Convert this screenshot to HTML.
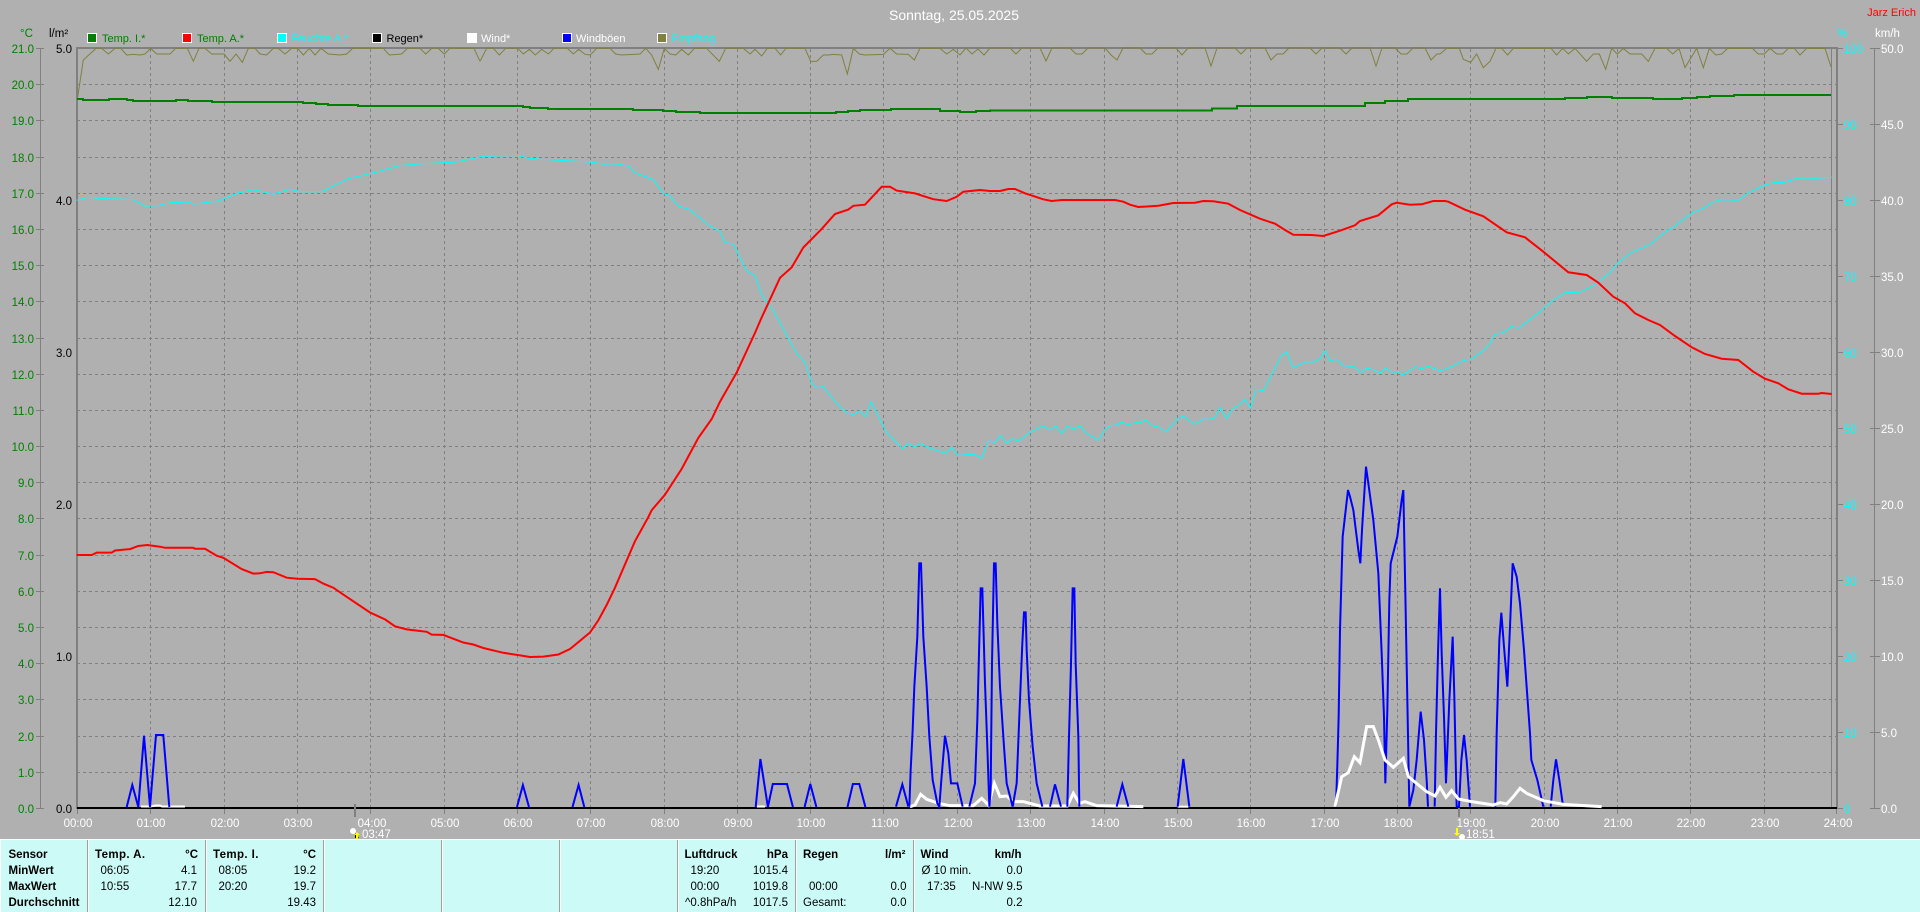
<!DOCTYPE html>
<html lang="de">
<head>
<meta charset="utf-8">
<title>Sonntag, 25.05.2025</title>
<style>
html,body{margin:0;padding:0;background:#b0b0b0;overflow:hidden;width:1920px;height:912px}
svg{display:block;position:absolute;left:0;top:0}
text{font-family:"Liberation Sans",Arial,sans-serif;font-size:11.5px}
.e{text-anchor:end}
.m{text-anchor:middle}
.g{fill:#008000}
.k{fill:#000}
.c{fill:#00ffff}
.w{fill:#fff}
.b{font-weight:bold}
polyline,path.l{fill:none;vector-effect:non-scaling-stroke;stroke-linejoin:miter}
</style>
</head>
<body>
<svg width="1920" height="912" viewBox="0 0 1920 912" xmlns="http://www.w3.org/2000/svg">
<rect width="1920" height="912" fill="#b0b0b0"/>

<!-- title -->
<text x="889" y="20" class="w" style="font-size:14px">Sonntag, 25.05.2025</text>
<text x="1916" y="16" class="e" fill="#ff0000" style="font-size:11px">Jarz Erich</text>

<!-- axis headers -->
<text x="20" y="37" class="g">°C</text>
<text x="49" y="37" class="k">l/m²</text>
<text x="1837" y="37" class="c">%</text>
<text x="1875" y="37" class="w">km/h</text>

<!-- legend -->
<g stroke="#fff" stroke-width="1" shape-rendering="crispEdges">
<rect x="87.5" y="33.5" width="9" height="9" fill="#008000"/>
<rect x="182.5" y="33.5" width="9" height="9" fill="#ff0000"/>
<rect x="277.5" y="33.5" width="9" height="9" fill="#00ffff"/>
<rect x="372.5" y="33.5" width="9" height="9" fill="#000"/>
<rect x="467.5" y="33.5" width="9" height="9" fill="#fff"/>
<rect x="562.5" y="33.5" width="9" height="9" fill="#0000ff"/>
<rect x="657.5" y="33.5" width="9" height="9" fill="#808040"/>
</g>
<g style="font-size:11px">
<text x="102" y="42" class="g" style="font-size:11px">Temp. I.*</text>
<text x="197" y="42" class="g" style="font-size:11px">Temp. A.*</text>
<text x="291.500" y="42" class="c" style="font-size:11px">Feuchte A.*</text>
<text x="386.500" y="42" class="k" style="font-size:11px">Regen*</text>
<text x="481" y="42" class="w" style="font-size:11px">Wind*</text>
<text x="576" y="42" class="w" style="font-size:11px">Windböen</text>
<text x="671.500" y="42" class="c" style="font-size:11px">Empfang</text>
</g>

<!-- grid -->
<path shape-rendering="crispEdges" stroke="#808080" stroke-width="1" stroke-dasharray="3 3" fill="none" d="M77 84.5H1836M77 120.5H1836M77 157.5H1836M77 193.5H1836M77 229.5H1836M77 265.5H1836M77 301.5H1836M77 338.5H1836M77 374.5H1836M77 410.5H1836M77 446.5H1836M77 482.5H1836M77 518.5H1836M77 555.5H1836M77 591.5H1836M77 627.5H1836M77 663.5H1836M77 699.5H1836M77 736.5H1836M77 772.5H1836"/>
<path shape-rendering="crispEdges" stroke="#808080" stroke-width="1" stroke-dasharray="3 3" fill="none" d="M150.500 49V808M224.500 49V808M297.500 49V808M370.500 49V808M444.500 49V808M517.500 49V808M590.500 49V808M664.500 49V808M737.500 49V808M810.500 49V808M883.500 49V808M957.500 49V808M1030.500 49V808M1104.500 49V808M1177.500 49V808M1250.500 49V808M1324.500 49V808M1397.500 49V808M1470.500 49V808M1544.500 49V808M1617.500 49V808M1690.500 49V808M1764.500 49V808"/>
<!-- hour ticks -->
<path shape-rendering="crispEdges" stroke="#808080" stroke-width="1" fill="none" d="M77.500 808V814M150.500 808V814M224.500 808V814M297.500 808V814M370.500 808V814M444.500 808V814M517.500 808V814M590.500 808V814M664.500 808V814M737.500 808V814M810.500 808V814M883.500 808V814M957.500 808V814M1030.500 808V814M1104.500 808V814M1177.500 808V814M1250.500 808V814M1324.500 808V814M1397.500 808V814M1470.500 808V814M1544.500 808V814M1617.500 808V814M1690.500 808V814M1764.500 808V814M1836.500 808V814"/>

<!-- axes -->
<g shape-rendering="crispEdges" fill="#808080">
<rect x="76" y="47" width="1761" height="2"/>
<rect x="76" y="47" width="2" height="762"/>
<rect x="1831" y="48" width="1" height="760"/>
<rect x="1836" y="47" width="2" height="762"/>
<rect x="40" y="48" width="1" height="760"/>
<rect x="1874" y="48" width="1" height="760"/>
</g>
<path shape-rendering="crispEdges" stroke="#808080" stroke-width="1" fill="none" d="M36 48.500H44M36 84.500H44M36 120.500H44M36 157.500H44M36 193.500H44M36 229.500H44M36 265.500H44M36 301.500H44M36 338.500H44M36 374.500H44M36 410.500H44M36 446.500H44M36 482.500H44M36 518.500H44M36 555.500H44M36 591.500H44M36 627.500H44M36 663.500H44M36 699.500H44M36 736.500H44M36 772.500H44M36 808.500H44"/>
<path shape-rendering="crispEdges" stroke="#808080" stroke-width="1" fill="none" d="M1838 48.500H1843M1838 124.500H1843M1838 200.500H1843M1838 276.500H1843M1838 352.500H1843M1838 428.500H1843M1838 504.500H1843M1838 580.500H1843M1838 656.500H1843M1838 732.500H1843M1838 808.500H1843M1870 48.500H1880M1870 124.500H1880M1870 200.500H1880M1870 276.500H1880M1870 352.500H1880M1870 428.500H1880M1870 504.500H1880M1870 580.500H1880M1870 656.500H1880M1870 732.500H1880M1870 808.500H1880"/>

<!-- left temp labels -->
<g class="e">
<text x="34" y="53" class="g e">21.0</text>
<text x="34" y="89" class="g e">20.0</text>
<text x="34" y="125" class="g e">19.0</text>
<text x="34" y="162" class="g e">18.0</text>
<text x="34" y="198" class="g e">17.0</text>
<text x="34" y="234" class="g e">16.0</text>
<text x="34" y="270" class="g e">15.0</text>
<text x="34" y="306" class="g e">14.0</text>
<text x="34" y="343" class="g e">13.0</text>
<text x="34" y="379" class="g e">12.0</text>
<text x="34" y="415" class="g e">11.0</text>
<text x="34" y="451" class="g e">10.0</text>
<text x="34" y="487" class="g e">9.0</text>
<text x="34" y="523" class="g e">8.0</text>
<text x="34" y="560" class="g e">7.0</text>
<text x="34" y="596" class="g e">6.0</text>
<text x="34" y="632" class="g e">5.0</text>
<text x="34" y="668" class="g e">4.0</text>
<text x="34" y="704" class="g e">3.0</text>
<text x="34" y="741" class="g e">2.0</text>
<text x="34" y="777" class="g e">1.0</text>
<text x="34" y="813" class="g e">0.0</text>
</g>
<!-- rain labels -->
<text x="72" y="53" class="k e">5.0</text>
<text x="72" y="205" class="k e">4.0</text>
<text x="72" y="357" class="k e">3.0</text>
<text x="72" y="509" class="k e">2.0</text>
<text x="72" y="661" class="k e">1.0</text>
<text x="72" y="813" class="k e">0.0</text>
<!-- percent labels -->
<text x="1844" y="53" class="c">100</text>
<text x="1844" y="129" class="c">90</text>
<text x="1844" y="205" class="c">80</text>
<text x="1844" y="281" class="c">70</text>
<text x="1844" y="357" class="c">60</text>
<text x="1844" y="433" class="c">50</text>
<text x="1844" y="509" class="c">40</text>
<text x="1844" y="585" class="c">30</text>
<text x="1844" y="661" class="c">20</text>
<text x="1844" y="737" class="c">10</text>
<text x="1844" y="813" class="c">0</text>
<!-- km/h labels -->
<text x="1881" y="53" class="w">50.0</text>
<text x="1881" y="129" class="w">45.0</text>
<text x="1881" y="205" class="w">40.0</text>
<text x="1881" y="281" class="w">35.0</text>
<text x="1881" y="357" class="w">30.0</text>
<text x="1881" y="433" class="w">25.0</text>
<text x="1881" y="509" class="w">20.0</text>
<text x="1881" y="585" class="w">15.0</text>
<text x="1881" y="661" class="w">10.0</text>
<text x="1881" y="737" class="w">5.0</text>
<text x="1881" y="813" class="w">0.0</text>

<!-- hour labels -->
<g>
<text x="78" y="827" class="w m">00:00</text>
<text x="151" y="827" class="w m">01:00</text>
<text x="225" y="827" class="w m">02:00</text>
<text x="298" y="827" class="w m">03:00</text>
<text x="372" y="827" class="w m">04:00</text>
<text x="445" y="827" class="w m">05:00</text>
<text x="518" y="827" class="w m">06:00</text>
<text x="591" y="827" class="w m">07:00</text>
<text x="665" y="827" class="w m">08:00</text>
<text x="738" y="827" class="w m">09:00</text>
<text x="811" y="827" class="w m">10:00</text>
<text x="885" y="827" class="w m">11:00</text>
<text x="958" y="827" class="w m">12:00</text>
<text x="1031" y="827" class="w m">13:00</text>
<text x="1105" y="827" class="w m">14:00</text>
<text x="1178" y="827" class="w m">15:00</text>
<text x="1251" y="827" class="w m">16:00</text>
<text x="1325" y="827" class="w m">17:00</text>
<text x="1398" y="827" class="w m">18:00</text>
<text x="1471" y="827" class="w m">19:00</text>
<text x="1545" y="827" class="w m">20:00</text>
<text x="1618" y="827" class="w m">21:00</text>
<text x="1691" y="827" class="w m">22:00</text>
<text x="1765" y="827" class="w m">23:00</text>
<text x="1838" y="827" class="w m">24:00</text>
</g>

<!-- signal (olive) -->
<g transform="scale(.33333)"><polyline stroke="#808040" stroke-width="1" points="232,297 250,180 288,145 305,145 325,162 345,145 362,145 380,165 400,163 420,165 435,162 452,145 470,162 510,162 527,145 562,145 580,184 597,145 615,145 635,162 672,162 690,184 708,162 727,187 745,145 765,145 780,162 800,165 820,145 835,145 855,162 875,145 893,145 910,165 928,145 945,165 963,145 985,162 1020,165 1040,162 1058,145 1150,145 1168,165 1205,162 1222,145 1260,145 1277,162 1295,145 1315,145 1333,162 1350,145 1422,145 1440,184"/></g>
<g transform="translate(480 0) scale(.33333)"><polyline stroke="#808040" stroke-width="1" points="0,184 20,145 40,145 58,165 77,145 113,145 130,162 148,148 166,165 185,148 205,162 222,145 262,145 280,162 296,148 315,163 331,165 350,145 390,145 407,162 425,165 480,162 497,145 515,165 535,208 553,145 570,162 587,165 605,148 625,165 643,145 680,145 718,184 737,145 790,145 810,162 825,148 845,168 862,145 885,145 902,165 918,145 975,145 992,184 1010,184 1030,165 1045,165 1060,163 1085,165 1102,222 1120,145 1138,162 1155,165 1210,163 1230,145 1250,162 1285,163 1303,180 1320,145 1380,145 1400,162 1420,148 1440,165"/></g>
<polyline stroke="#808040" stroke-width="1" points="960,55 966,48 972,54 978,49 984,55 990,48 1010,48 1016,54 1022,48 1040,48 1046,61 1052,48 1070,48 1076,54 1082,54 1088,48 1105,48 1111,55 1117,60 1123,48 1140,48 1146,54 1152,54 1158,48 1176,48 1182,55 1188,48 1205,48 1211,66 1217,48 1235,48 1241,54 1247,48 1265,48 1271,60 1277,54 1283,54 1289,48 1310,48 1316,54 1322,48 1340,48 1346,54 1352,48 1370,48 1376,66 1382,48 1395,48 1401,54 1407,54 1413,48 1425,48 1431,60 1437,54 1440,54"/>
<g transform="translate(1440 0) scale(.33333)"><polyline stroke="#808040" stroke-width="1" points="0,162 20,145 58,145 70,178 92,187 110,162 130,203 150,184 168,145 185,145 203,165 220,145 333,145 350,165 368,145 385,162 405,145 440,184 460,162 478,162 497,208 515,145 532,162 550,145 570,162 605,162 625,184 645,145 680,145 698,162 717,145 735,203 770,145 790,203 808,145 827,165 845,162 863,145 937,145 955,162 973,162 990,145 1010,162 1028,162 1045,145 1063,145 1080,165 1100,145 1155,145 1173,200"/></g>

<!-- indoor temp (green) -->
<path class="l" shape-rendering="crispEdges" stroke="#008000" stroke-width="2" d="M77 99H83V100H109V99H127V100H133V101H176V100H188V101H212V102H303V103H316V104H328V105H358V106H523V107H530V108H548V109H633V110H663V111H676V112H700V113H836V112H848V111H860V110H891V109H940V111H960V112H976V111H990V110.500H1212V108.500H1237V106H1365V103H1385V101H1408V99H1565V98H1587V97H1612V98H1653V99H1682V98H1697V97H1710V96H1734V95H1831"/>

<!-- humidity (cyan) -->
<polyline stroke="#00ffff" stroke-width="1" points="76.700,200.300 88.300,197.200 100,198.500 133.300,199.600 145,206.100 156.700,205.800 170,202.700 188.300,202 193.300,204.100 218.300,201 236.700,193.400 253.300,189.600 273.300,194.100 290,189.200 300,191.700 321.700,191.700 348.300,178.600 378.300,171.700 398.300,165.800 421.700,163.800 456.700,162 483.300,156.200 518.300,155.500 526.700,157.900 540,159.300 590,162 603.300,164.100 616.700,163.800 628.300,166.200 635,172.700 653.300,179.600 663.300,193.400 670,195.800 678.300,206.100 690,209.600 710,226.100 720,231.600 725,242.600 733.300,244 746.700,270.900 755,275.300 761.700,295 773.300,310.500 796.700,353.500 805,362.100 811.700,382.800 816.700,388 823.300,386.600 836.700,403.500 846.700,412.800 853.300,414.500 860,410.700 865.700,416.600 871,401.700 886.700,432.700 902.700,448.900 908.300,443.100 915,447.200 920,443.100 928.300,447.500 945,453.400 951.700,447.500 958.300,455.500 973.300,454.100 981.700,458.300 988.300,441 995,442.300 1000.700,435.300 1006.700,443.300 1012.300,438.700 1018.300,441.300 1030,432.300 1043.300,425.700 1049.300,430 1056,426 1061.700,433.300 1067.300,426.300 1073.300,428.700 1080,426 1086.700,433.300 1098.300,440.300 1105,429.300 1110,425.700 1116.700,425 1121.700,422 1128.300,425 1135,422.700 1140,422.700 1145.700,420 1153.300,426 1160,427.300 1165.700,432 1178.300,418 1183.300,416.300 1195,424.300 1202.700,419.300 1210,419.300 1215,417.700 1220,407.700 1226.700,418.300 1233.300,407.700 1238.300,405.700 1245,399.300 1250.700,408.300 1256,389.300 1263.300,390.700 1273.300,371.700 1281,355.700 1286.700,352 1293.300,368 1305,362 1313.300,362 1320,358.700 1325,350.700 1330,360.700 1336.700,359.300 1343.300,365.700 1353.300,366.300 1360.700,372.300 1366.700,368.300 1373.300,369.700 1380,373 1385.700,368.300 1391.700,372 1396.700,371.700 1403.300,375 1415,366.700 1421.700,368.700 1428.300,366 1440,371 1453.300,366 1460,361.700 1471.700,358.700 1483.300,350.700 1490,343.300 1495,334.300 1503.300,332.700 1511.700,326.300 1518.300,328.300 1540,311.700 1553.300,300 1565,292.700 1580,292.300 1595,284.700 1610,272.700 1616.700,264 1630,253.300 1650,244.300 1666.700,230.700 1673.300,227.300 1680,221.700 1691.700,213.300 1703.300,208.300 1713.300,201.700 1721.700,199.700 1738.300,200.300 1748.300,192.700 1765,185 1775,182.300 1783.300,182.700 1798.300,178 1816.700,178.300 1831.700,177.300"/>

<!-- outdoor temp (red) -->
<polyline stroke="#ff0000" stroke-width="2" points="76.700,555 91.700,555 96.700,552.600 111.700,552.600 115,550.500 130,549.100 138.300,546 147.300,545 160,546.700 165,547.800 193.300,547.800 195,548.800 205,548.800 216.700,555.700 223.300,557.800 241.700,569.100 253.300,573.600 260,573.300 266.700,571.900 273.300,572.200 286.700,577.700 297.300,578.800 315,579.100 323.300,583.600 333.300,587.700 343.300,594.600 370,612.500 385,619.400 395,626.300 406.700,629.400 426.700,631.800 431.700,634.600 443.300,634.900 463.300,642.500 473.300,644.500 483.300,648 503.300,652.800 520,655.400 530,657 543.300,656.600 558.300,654.500 570,649 590,632.500 598.300,620.400 606.700,604.900 615,587.700 628.300,556.700 635,541.200 648.300,517.100 651.700,510.200 665,494.700 681.700,468.900 698.300,437.900 711.700,419 720,401.700 736.700,372.500 755,332.900 761.700,317.400 780,277.800 791.700,267.400 803.300,247.500 821.700,228.900 835,214 848.300,209.600 853.300,205.800 865,204.700 881.700,186.800 890,186.800 896.700,190.600 915,193.400 933.300,199.200 946.700,201 956.700,196.800 963.300,191.700 980,190 990,191 1000,191 1008.300,189 1015,189 1025,193.300 1043.300,199.300 1051.700,201 1061.700,200 1115,200 1123.300,201.700 1130,204.700 1138.300,207 1158.300,205.700 1173.300,203 1195,202.700 1203.300,201 1213.300,201.300 1228.300,203.700 1240,210 1260,218.700 1275,223.700 1285,230 1293.300,234.700 1311.700,235 1323.300,236 1340,230.700 1355,225.300 1360,221 1378.300,215.300 1391.700,204.300 1396.700,202.700 1410,204.700 1421.700,204.300 1433.300,201 1445,201 1448.300,201.700 1465,209.700 1473.300,212.700 1483.300,216.300 1506.700,232.300 1525,237.300 1543.300,251.700 1568.300,272.300 1586.700,275 1598.300,282.700 1613.300,296.700 1625,303.300 1635,313.300 1648.300,320 1660,325 1675,336 1691.700,347.300 1705,354 1721.700,358.700 1738.300,360 1753.300,371.700 1765,378.700 1778.300,383.300 1788.300,389.300 1801.700,393.700 1818.300,393.700 1821.700,393 1831.700,394"/>

<!-- baseline -->
<rect x="77" y="807" width="1760" height="2" fill="#000" shape-rendering="crispEdges"/>

<!-- white wind -->
<polyline stroke="#fff" stroke-width="2" points="141,806.500 150,806.500 156,805.500 160,805.500 162,806.500 185,806.500"/>
<polyline stroke="#fff" stroke-width="2" points="757,806.500 765,806.500"/>
<g transform="translate(880 540) scale(.33333)"><polyline stroke="#fff" stroke-width="3" points="90,800 105,795 122,763 140,778 175,790 210,797 280,797 305,775 325,795 343,730 360,770 380,768 400,785 430,785 480,798 562,798 580,760 598,790 615,785 650,797 790,800"/><polyline stroke="#fff" stroke-width="2" points="893,800 925,800"/></g>

<!-- blue gusts -->
<polyline stroke="#0000ff" stroke-width="2" points="126.700,807 132.300,785 138.300,807 144,735.700 150,807 156,735 163.300,735 169.300,807"/>
<polyline stroke="#0000ff" stroke-width="2" points="517,807 522.900,785 529,807"/>
<polyline stroke="#0000ff" stroke-width="2" points="572.500,807 578.600,785 584.300,807"/>
<polyline stroke="#0000ff" stroke-width="2" points="755.700,807 760.400,759 767.900,807 772.800,784 787,784 792.900,807"/>
<polyline stroke="#0000ff" stroke-width="2" points="804.600,807 810.300,784 816.400,807"/>
<polyline stroke="#0000ff" stroke-width="2" points="847.500,807 852.900,784 859.300,784 865.400,807"/>
<g transform="translate(880 540) scale(.33333)">
<polyline stroke="#0000ff" stroke-width="2" points="48,800 67,733 85,800"/>
<polyline stroke="#0000ff" stroke-width="2" points="88,800 92,690 98,570 103,440 112,290 118,70 123,70 130,290 140,440 148,590 158,720 172,790 178,800 184,720 195,587 205,640 213,730 232,730 248,800"/>
<polyline stroke="#0000ff" stroke-width="2" points="268,800 285,730 292,540 297,340 302,145 307,145 315,430 322,620 328,800 332,750 336,370 342,70 347,70 352,250 360,440 372,620 380,730 398,800 410,730 420,480 427,310 432,217 437,217 440,330 447,480 458,620 470,730 487,800"/>
<polyline stroke="#0000ff" stroke-width="2" points="510,800 525,733 543,800"/>
<polyline stroke="#0000ff" stroke-width="2" points="562,800 567,590 573,370 578,145 583,145 587,370 595,590 598,800"/>
<polyline stroke="#0000ff" stroke-width="2" points="710,800 727,733 745,800"/>
<polyline stroke="#0000ff" stroke-width="2" points="893,800 910,657 928,800"/>
</g>
<g transform="translate(1300 440) scale(.33333)">
<polyline stroke="#0000ff" stroke-width="2" points="108,1100 112,975 116,830 120,570 124,430 128,290 144,150 150,170 160,210 175,330 181,370 186,270 198,80 205,130 220,240 235,400 245,640 252,830 256,1030 262,810 268,480 272,370 292,290 305,180 310,150 316,460 322,780 328,1100 340,1050 350,960 362,815 372,900 380,1020 384,1100"/>
<polyline stroke="#0000ff" stroke-width="2" points="404,1100 408,880 414,640 420,445 425,640 432,830 438,1030 448,780 458,590 463,770 470,1100 477,1100 484,960 492,885 500,960 510,1100"/>
<polyline stroke="#0000ff" stroke-width="2" points="586,1100 590,880 598,600 604,518 612,620 622,740 630,560 638,370 650,410 660,490 672,630 690,880 694,960 712,1020 730,1100"/>
<polyline stroke="#0000ff" stroke-width="2" points="752,1100 760,1020 768,958 778,1020 788,1090"/>
<polyline stroke="#fff" stroke-width="3" points="105,1100 125,1010 145,998 163,950 180,968 200,860 220,860 235,900 255,960 280,982 310,955 325,1010 380,1055 405,1068 420,1042 438,1072 455,1052 475,1077 515,1085 580,1095 600,1088 620,1092 640,1070 660,1045 680,1060 730,1082 790,1093 905,1100"/>
</g>

<!-- sunrise / sunset -->
<rect x="354" y="804" width="2" height="13" fill="#808080"/>
<rect x="1458" y="808" width="2" height="9" fill="#808080"/>
<circle cx="353" cy="831" r="3" fill="#fff"/>
<path d="M355 833l4 5h-4z" fill="#000"/>
<path d="M357 832l3 3h-2v4h-2v-4h-2z" fill="#ffff00"/>
<text x="362" y="838" class="w">03:47</text>
<path d="M1457 836l3-3h-2v-5h-2v5h-2z" fill="#ffff00"/>
<circle cx="1462" cy="837" r="3" fill="#fff"/>
<text x="1466" y="838" class="w">18:51</text>

<!-- table -->
<rect x="0" y="839" width="1920" height="73" fill="#ccfbf7"/>
<rect x="0" y="839" width="1920" height="1" fill="#fff"/>
<rect x="0" y="839" width="1" height="73" fill="#fff"/>
<g shape-rendering="crispEdges">
<rect x="87" y="840" width="1" height="72" fill="#a0a0a0"/><rect x="88" y="840" width="1" height="72" fill="#fff"/>
<rect x="205" y="840" width="1" height="72" fill="#a0a0a0"/><rect x="206" y="840" width="1" height="72" fill="#fff"/>
<rect x="323" y="840" width="1" height="72" fill="#a0a0a0"/><rect x="324" y="840" width="1" height="72" fill="#fff"/>
<rect x="441" y="840" width="1" height="72" fill="#a0a0a0"/><rect x="442" y="840" width="1" height="72" fill="#fff"/>
<rect x="559" y="840" width="1" height="72" fill="#a0a0a0"/><rect x="560" y="840" width="1" height="72" fill="#fff"/>
<rect x="677" y="840" width="1" height="72" fill="#a0a0a0"/><rect x="678" y="840" width="1" height="72" fill="#fff"/>
<rect x="795" y="840" width="1" height="72" fill="#a0a0a0"/><rect x="796" y="840" width="1" height="72" fill="#fff"/>
<rect x="913" y="840" width="1" height="72" fill="#a0a0a0"/><rect x="914" y="840" width="1" height="72" fill="#fff"/>
</g>
<text x="8.500" y="858" class="k b">Sensor</text>
<text x="8.500" y="874" class="k b">MinWert</text>
<text x="8.500" y="890" class="k b">MaxWert</text>
<text x="8.500" y="906" class="k b">Durchschnitt</text>

<text x="95" y="858" class="k b" style="letter-spacing:.4px">Temp. A.</text>
<text x="198" y="858" class="k b e">°C</text>
<text x="100.500" y="874" class="k">06:05</text>
<text x="197" y="874" class="k e">4.1</text>
<text x="100.500" y="890" class="k">10:55</text>
<text x="197" y="890" class="k e">17.7</text>
<text x="197" y="906" class="k e">12.10</text>

<text x="213" y="858" class="k b" style="letter-spacing:.4px">Temp. I.</text>
<text x="316" y="858" class="k b e">°C</text>
<text x="218.500" y="874" class="k">08:05</text>
<text x="316" y="874" class="k e">19.2</text>
<text x="218.500" y="890" class="k">20:20</text>
<text x="316" y="890" class="k e">19.7</text>
<text x="316" y="906" class="k e">19.43</text>

<text x="684.500" y="858" class="k b">Luftdruck</text>
<text x="788" y="858" class="k b e">hPa</text>
<text x="690.500" y="874" class="k">19:20</text>
<text x="788" y="874" class="k e">1015.4</text>
<text x="690.500" y="890" class="k">00:00</text>
<text x="788" y="890" class="k e">1019.8</text>
<text x="685" y="906" class="k">^0.8hPa/h</text>
<text x="788" y="906" class="k e">1017.5</text>

<text x="803" y="858" class="k b">Regen</text>
<text x="905.500" y="858" class="k b e">l/m²</text>
<text x="809" y="890" class="k">00:00</text>
<text x="906.500" y="890" class="k e">0.0</text>
<text x="803" y="906" class="k">Gesamt:</text>
<text x="906.500" y="906" class="k e">0.0</text>

<text x="920.500" y="858" class="k b">Wind</text>
<text x="1021.500" y="858" class="k b e">km/h</text>
<text x="921.500" y="874" class="k">Ø 10 min.</text>
<text x="1022.500" y="874" class="k e">0.0</text>
<text x="927" y="890" class="k">17:35</text>
<text x="1022.500" y="890" class="k e">N-NW 9.5</text>
<text x="1022.500" y="906" class="k e">0.2</text>
</svg>
</body>
</html>
